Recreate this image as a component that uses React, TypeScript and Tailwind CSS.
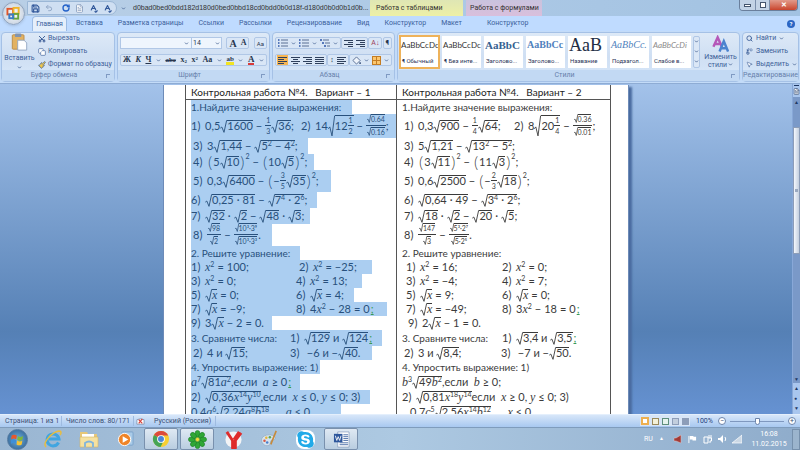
import type { ReactNode } from 'react';
import { ChevronDown, FileText, Save, Undo2, RotateCw, SpellCheck, Scissors, Copy, Paintbrush, Search, Replace, MousePointer2 } from 'lucide-react';
import { FaSkype } from 'react-icons/fa';

type Kids = { children: ReactNode };

/* ---------- formulas ---------- */

function Root({ children, tall }: Kids & { tall?: boolean }) {
  return (
    <span className="inline-flex items-stretch">
      <svg className="w-[7px] shrink-0 self-stretch" viewBox="0 0 7 12" preserveAspectRatio="none" fill="none" stroke="currentColor">
        <path d="M0.3 7.5L1.8 6.5L4 11.4L6.6 0.5H7" vectorEffect="non-scaling-stroke" strokeWidth="0.9" />
      </svg>
      <span className={`inline-flex items-center border-t border-current pb-px ${tall ? 'h-[22px]' : 'h-[13px]'}`}>{children}</span>
    </span>
  );
}

function SmallRoot({ children }: Kids) {
  return (
    <span className="inline-flex items-stretch">
      <svg className="w-[4px] shrink-0 self-stretch" viewBox="0 0 4 8" preserveAspectRatio="none" fill="none" stroke="currentColor">
        <path d="M0.2 5L1 4.5L2.3 7.5L3.8 0.4H4" strokeWidth="0.7" />
      </svg>
      <span className="inline-flex h-[9px] items-center border-t border-current">{children}</span>
    </span>
  );
}

const Frac = ({ a, b }: { a: ReactNode; b: ReactNode }) => (
  <span className="inline-flex flex-col items-center text-[7px] leading-[9px]">
    <span className="border-b border-current px-px">{a}</span>
    <span className="px-px pt-px">{b}</span>
  </span>
);

const Sup = ({ children }: Kids) => <span className="mb-1.5 text-[7px] leading-none">{children}</span>;
const HighSup = ({ children }: Kids) => <span className="mb-3 text-[7px] leading-none">{children}</span>;
const V = ({ children }: Kids) => <i className="font-['Liberation_Serif',serif] text-[12px]">{children}</i>;
const Op = ({ children }: Kids) => <span className="px-[3px]">{children}</span>;
const Par = ({ children }: Kids) => <span className="px-px text-[16px] leading-none font-light">{children}</span>;
const Gram = () => <span className="ml-px text-[#3a9a5a] underline">;</span>;

const Minus = () => <Op>−</Op>;
const Eq = () => <Op>=</Op>;
const Dot = () => <Op>·</Op>;
const RootX = () => <Root><V>x</V></Root>;
const X2 = () => <><V>x</V><Sup>2</Sup></>;

function Item({ n, w, children }: Kids & { n: string; w?: string }) {
  return (
    <span className={`inline-flex shrink-0 items-center text-[11px] ${w ?? ''}`}>
      <span className="w-[14px] shrink-0">{n}</span>
      {children}
    </span>
  );
}

type LineProps = Kids & { h?: string; sel?: string };

function Line({ h = 'h-[14px]', sel = '', children }: LineProps) {
  return (
    <div className={`flex items-center whitespace-pre ${h} ${sel && `${sel} bg-[#abcef1]`}`}>{children}</div>
  );
}

function VariantOne() {
  return (
    <div className="text-[#28507c]">
      <Line sel="w-[161px]">1.Найдите значение выражения:</Line>
      <Line h="h-[24px]" sel="w-[205px]">
        <Item n="1)" w="w-[110px]">0,5<Root>1600</Root><Minus /><Frac a="1" b="3" /><Root>36</Root>;</Item>
        <Item n="2)">14<Root tall>12<Frac a="1" b="2" /></Root><Minus /><Frac a={<SmallRoot>0.64</SmallRoot>} b={<SmallRoot>0.16</SmallRoot>} />;</Item>
      </Line>
      <Line h="h-[16px]" sel="w-[117px] pl-0.5"><Item n="3)">3<Root>1,44</Root><Minus /><Root>5<Sup>2</Sup><Minus />4<Sup>2</Sup></Root>;</Item></Line>
      <Line h="h-[16px]" sel="w-[123px] pl-0.5"><Item n="4)"><Par>(</Par>5<Root>10</Root><Par>)</Par><HighSup>2</HighSup><Minus /><Par>(</Par>10<Root>5</Root><Par>)</Par><HighSup>2</HighSup>;</Item></Line>
      <Line h="h-[22px]" sel="w-[140px] pl-0.5"><Item n="5)">0,3<Root>6400</Root><Minus /><Par>(</Par>−<Frac a="3" b="5" /><Root>35</Root><Par>)</Par><HighSup>2</HighSup>;</Item></Line>
      <Line h="h-[16px]" sel="w-[126px]"><Item n="6)"><Root>0,25<Dot />81</Root><Minus /><Root>7<Sup>4</Sup><Dot />2<Sup>6</Sup></Root>;</Item></Line>
      <Line h="h-[16px]" sel="w-[119px]"><Item n="7)"><Root>32</Root><Dot /><Root>2</Root><Minus /><Root>48</Root><Dot /><Root>3</Root>;</Item></Line>
      <Line h="h-[22px]" sel="w-[81px] pl-0.5"><Item n="8)"><Frac a={<SmallRoot>98</SmallRoot>} b={<SmallRoot>2</SmallRoot>} /><Minus /><Frac a={<SmallRoot>10³·3⁹</SmallRoot>} b={<SmallRoot>10³·3³</SmallRoot>} />.</Item></Line>
      <Line sel="w-[109px]">2. Решите уравнение:</Line>
      <Line sel="w-[181px]"><Item n="1)" w="w-[108px]"><X2 /><Eq />100;</Item><Item n="2)"><X2 /><Eq />−25;</Item></Line>
      <Line sel="w-[171px]"><Item n="3)" w="w-[105px]"><X2 /><Eq />0;</Item><Item n="4)"><X2 /><Eq />13;</Item></Line>
      <Line sel="w-[163px]"><Item n="5)" w="w-[105px]"><RootX /><Eq />0;</Item><Item n="6)"><RootX /><Eq />4;</Item></Line>
      <Line sel="w-[196px]"><Item n="7)" w="w-[105px]"><RootX /><Eq />−9;</Item><Item n="8)">4<X2 /><Minus />28<Eq />0<Gram /></Item></Line>
      <Line sel="w-[81px]"><Item n="9)">3<RootX /><Minus />2<Eq />0.</Item></Line>
      <Line h="h-[16px]" sel="w-[191px]"><span className="w-[99px]">3. Сравните числа:</span><Item n="1)"><Root>129</Root> и <Root>124</Root><Gram /></Item></Line>
      <Line sel="w-[181px] pl-0.5"><Item n="2)" w="w-[97px]">4 и <Root>15</Root>;</Item><Item n="3)"> −6 и −<Root>40</Root>.</Item></Line>
      <Line sel="w-[129px]">4. Упростить выражение: 1)</Line>
      <Line h="h-[16px] text-[11px]" sel="w-[109px]"><V>a</V><Sup>7</Sup><Root>81<V>a</V><Sup>2</Sup></Root>,если  <V>a</V> ≥ 0<Gram /></Line>
      <Line sel="w-[179px]"><Item n="2)"><Root>0,36<V>x</V><Sup>14</Sup><V>y</V><Sup>10</Sup></Root>,если  <V>x</V> ≤ 0, <V>y</V> ≤ 0; 3)</Item></Line>
      <Line h="h-[16px] text-[11px]" sel="w-[150px]">0,4<V>a</V><Sup>6</Sup> <Root>2,24<V>a</V><Sup>8</Sup><V>b</V><Sup>18</Sup></Root>,     <V>a</V> ≤ 0</Line>
    </div>
  );
}

function VariantTwo() {
  return (
    <div className="text-[#3b3b3b]">
      <Line>1.Найдите значение выражения:</Line>
      <Line h="h-[24px] pl-0.5">
        <Item n="1)" w="w-[110px]">0,3<Root>900</Root><Minus /><Frac a="1" b="4" /><Root>64</Root>;</Item>
        <Item n="2)">8<Root tall>20<Frac a="1" b="4" /></Root><Minus /><Frac a={<SmallRoot>0.36</SmallRoot>} b={<SmallRoot>0.01</SmallRoot>} />;</Item>
      </Line>
      <Line h="h-[16px] pl-0.5"><Item n="3)">5<Root>1,21</Root><Minus /><Root>13<Sup>2</Sup><Minus />5<Sup>2</Sup></Root>;</Item></Line>
      <Line h="h-[16px] pl-0.5"><Item n="4)"><Par>(</Par>3<Root>11</Root><Par>)</Par><HighSup>2</HighSup><Minus /><Par>(</Par>11<Root>3</Root><Par>)</Par><HighSup>2</HighSup>;</Item></Line>
      <Line h="h-[22px] pl-0.5"><Item n="5)">0,6<Root>2500</Root><Minus /><Par>(</Par>−<Frac a="2" b="3" /><Root>18</Root><Par>)</Par><HighSup>2</HighSup>;</Item></Line>
      <Line h="h-[16px] pl-0.5"><Item n="6)"><Root>0,64<Dot />49</Root><Minus /><Root>3<Sup>4</Sup><Dot />2<Sup>6</Sup></Root>;</Item></Line>
      <Line h="h-[16px] pl-0.5"><Item n="7)"><Root>18</Root><Dot /><Root>2</Root><Minus /><Root>20</Root><Dot /><Root>5</Root>;</Item></Line>
      <Line h="h-[22px] pl-0.5"><Item n="8)"><Frac a={<SmallRoot>147</SmallRoot>} b={<SmallRoot>3</SmallRoot>} /><Minus /><Frac a={<SmallRoot>5³·2⁷</SmallRoot>} b={<SmallRoot>5·2⁵</SmallRoot>} />.</Item></Line>
      <Line>2. Решите уравнение:</Line>
      <Line h="h-[14px] pl-1"><Item n="1)" w="w-[96px]"><X2 /><Eq />16;</Item><Item n="2)"><X2 /><Eq />0;</Item></Line>
      <Line h="h-[14px] pl-1"><Item n="3)" w="w-[96px]"><X2 /><Eq />−4;</Item><Item n="4)"><X2 /><Eq />7;</Item></Line>
      <Line h="h-[14px] pl-1"><Item n="5)" w="w-[96px]"><RootX /><Eq />9;</Item><Item n="6)"><RootX /><Eq />0;</Item></Line>
      <Line h="h-[14px] pl-1"><Item n="7)" w="w-[96px]"><RootX /><Eq />−49;</Item><Item n="8)">3<X2 /><Minus />18<Eq />0<Gram /></Item></Line>
      <Line h="h-[14px] pl-1.5"><Item n="9)">2<RootX /><Minus />1<Eq />0.</Item></Line>
      <Line h="h-[16px]"><span className="w-[100px]">3. Сравните числа:</span><Item n="1)"><Root>3,4</Root> и <Root>3,5</Root><Gram /></Item></Line>
      <Line h="h-[14px] pl-0.5"><Item n="2)" w="w-[97px]">3 и <Root>8,4</Root>;</Item><Item n="3)"> −7 и −<Root>50</Root>.</Item></Line>
      <Line>4. Упростить выражение: 1)</Line>
      <Line h="h-[16px] text-[11px]"><V>b</V><Sup>3</Sup><Root>49<V>b</V><Sup>2</Sup></Root>,если  <V>b</V> ≥ 0;</Line>
      <Line><Item n="2)"><Root>0,81<V>x</V><Sup>18</Sup><V>y</V><Sup>14</Sup></Root>если  <V>x</V> ≥ 0, <V>y</V> ≤ 0; 3)</Item></Line>
      <Line h="h-[16px] pl-2 text-[11px]">0,7<V>c</V><Sup>5</Sup> <Root>2,56<V>x</V><Sup>14</Sup><V>b</V><Sup>12</Sup></Root>,     <V>x</V> ≤ 0</Line>
    </div>
  );
}

/* ---------- title bar and ribbon ---------- */

const Caret = () => <ChevronDown className="size-[5px] shrink-0 text-[#4a6796]" strokeWidth={4} />;

function WindowsFlag({ className }: { className: string }) {
  return (
    <svg viewBox="0 0 20 20" className={className}>
      <path d="M1 4q4-3 8 0l-1 6q-4-3-8 0z" fill="#e8582c" />
      <path d="M10.500 4.500q4 3 8 0l-1 6q-4 3-8 0z" fill="#7fb83a" />
      <path d="M0 11q4-3 8 0l-1 6q-4-3-7 0z" fill="#3f8fd8" />
      <path d="M9.500 11.500q4 3 8 0l-1 6q-4 3-8 0z" fill="#f5c332" />
    </svg>
  );
}

function TitleBar() {
  return (
    <header className="relative flex h-4 shrink-0 items-center bg-linear-to-r from-[#b9cfe6] via-[#aecae6] to-[#a2c2e2] text-[7px] whitespace-nowrap text-[#333]">
      <button aria-label="Office" className="absolute top-0.5 left-0.5 z-10 flex size-[23px] items-center justify-center rounded-full border border-[#8fa3bd] bg-radial from-white to-[#b8c6d8] shadow">
        <svg viewBox="0 0 16 16" className="size-[15px]" fill="none" strokeWidth="2">
          <rect x="1.500" y="3" width="6" height="6" stroke="#e0562b" />
          <rect x="8" y="2" width="5.500" height="6" stroke="#f0b52a" />
          <rect x="8" y="8.500" width="5" height="5" stroke="#6aa53c" />
          <rect x="3.500" y="9" width="4" height="4" stroke="#3b7cc4" />
        </svg>
      </button>
      <div className="ml-[27px] flex h-[14px] w-[90px] items-center gap-[5px] rounded-r-full border border-[#9bb7d6] bg-[#cfdff2] pl-[3px] text-[#33599b]">
        <Save className="size-[9px]" strokeWidth={3} />
        <Undo2 className="size-[8px] text-[#93a9c8]" strokeWidth={3} />
        <RotateCw className="ml-1 size-[8px] text-[#2563c9]" strokeWidth={4} />
        <FileText className="size-[9px] fill-white text-[#7b93b5]" />
        <SpellCheck className="size-[9px]" strokeWidth={3} />
        <SpellCheck className="size-[9px]" strokeWidth={3} />
      </div>
      <span className="ml-1 w-[12px]"><Caret /></span>
      <h1 className="w-[237px] font-['Liberation_Sans',sans-serif]">d0bad0bed0bdd182d180d0bed0bbd18cd0bdd0b0d18f-d180d0b0d0b1d0b...</h1>
      <div className="h-full w-[93px] bg-linear-to-b from-[#dfe6b4] to-[#eef0a6] pl-[6px] leading-4">Работа с таблицами</div>
      <div className="ml-[3px] h-full w-[76px] bg-linear-to-b from-[#c9c3de] to-[#d9bfdc] pl-1 leading-4">Работа с формулами</div>
      <div className="mr-[2px] ml-auto flex h-[11px] self-start overflow-hidden rounded-b-sm border border-t-0 border-[#6a7f9c] leading-[10px] text-[#36465c]">
        <button aria-label="Свернуть" className="flex w-[16px] items-center justify-center border-r border-[#7b8fac] bg-[#c3d3e6]"><span className="h-[3px] w-[7px] border border-[#44546c] bg-white" /></button>
        <button aria-label="Развернуть" className="flex w-[14px] items-center justify-center border-r border-[#7b8fac] bg-[#c3d3e6]"><span className="size-[6px] border border-[#44546c] bg-white" /></button>
        <button aria-label="Закрыть" className="w-[27px] bg-linear-to-b from-[#e19a8b] to-[#c8432b] font-bold text-white">✕</button>
      </div>
    </header>
  );
}

const tabs = ['Вставка', 'Разметка страницы', 'Ссылки', 'Рассылки', 'Рецензирование', 'Вид', 'Конструктор', 'Макет'];

function Tabs() {
  return (
    <nav className="flex h-[15px] shrink-0 items-center gap-[15px] bg-[#bfdbff] pl-[32px] text-[7px] whitespace-nowrap text-[#3b5f9b]">
      <button className="-mr-[6px] h-full w-[35px] rounded-t-sm border border-b-0 border-[#9dbce4] bg-[#e5effb]">Главная</button>
      {tabs.map((t) => <button key={t}>{t}</button>)}
      <button className="ml-[10px]">Конструктор</button>
      <button aria-label="Справка" className="mr-[5px] ml-auto size-[8px] rounded-full bg-[#2b66c4] text-[6px] leading-[8px] font-bold text-white">?</button>
    </nav>
  );
}

function Group({ title, w, children }: Kids & { title: string; w: string }) {
  return (
    <section className={`flex flex-col rounded-sm border border-[#a5c1e6] bg-linear-to-b from-[#dde9f7] via-[#cfdff3] to-[#d8e8fa] ${w}`}>
      <div className="flex min-h-0 flex-1 items-center">{children}</div>
      <div className="flex h-[11px] items-center bg-[#c2d9f3] text-[7px] text-[#6680ab]">
        <span className="flex-1 text-center whitespace-nowrap">{title}</span>
        {title !== 'Редактирование' && <span className="mr-1 size-[4px] border-t border-l border-[#7f9ac2]" />}
      </div>
    </section>
  );
}

const ToolRow = ({ children }: Kids) => (
  <div className="flex h-[12px] items-center gap-[3px] rounded-xs border border-[#b0c7e6] bg-[#d9e6f6] px-[2px]">{children}</div>
);

function Bars({ kind = 'w-[9px]' }: { kind?: string }) {
  return (
    <span className="flex w-[9px] flex-col gap-px">
      <span className="h-px w-[9px] bg-[#2f405c]" />
      <span className={`h-px bg-[#2f405c] ${kind}`} />
      <span className="h-px w-[9px] bg-[#2f405c]" />
      <span className={`h-px bg-[#2f405c] ${kind}`} />
    </span>
  );
}

function ListIcon({ step }: { step?: boolean }) {
  return (
    <svg viewBox="0 0 10 8" className="h-[8px] w-[10px]" stroke="#4c6288" strokeWidth="0.9">
      <path d={step ? 'M0 1h2M2 4h2M4 7h2' : 'M0 1h1.500M0 4h1.500M0 7h1.500'} stroke="#2c55a8" strokeWidth="1.400" />
      <path d={step ? 'M3 1h6M5 4h5M7 7h3' : 'M3 1h7M3 4h7M3 7h7'} />
    </svg>
  );
}

const styleCards = [
  { name: '¶ Обычный', sample: 'AaBbCcDc', look: 'font-[Lato,sans-serif] text-[8px] text-[#333]' },
  { name: '¶ Без инте...', sample: 'AaBbCcDc', look: 'font-[Lato,sans-serif] text-[8px] text-[#333]' },
  { name: 'Заголово...', sample: 'AaBbC', look: "font-['Liberation_Serif',serif] text-[11px] font-bold text-[#365f91]" },
  { name: 'Заголово...', sample: 'AaBbCc', look: "font-['Liberation_Serif',serif] text-[10px] font-bold text-[#4f81bd]" },
  { name: 'Название', sample: 'AaB', look: "font-['Liberation_Serif',serif] text-[18px] text-[#222e44]" },
  { name: 'Подзагол...', sample: 'AaBbCc.', look: "font-['Liberation_Serif',serif] text-[10px] italic text-[#4f81bd]" },
  { name: 'Слабое в...', sample: 'AaBbCcDi', look: 'font-[Lato,sans-serif] text-[8px] italic text-[#8a8a8a]' },
];

function Ribbon() {
  return (
    <div className="flex h-[52px] shrink-0 gap-[2px] bg-[#c3dbf8] px-px pt-px pb-px text-[7px] whitespace-nowrap text-[#3d5f98]">
      <Group title="Буфер обмена" w="w-[114px] shrink-0">
        <button className="flex w-[35px] flex-col items-center gap-[3px] leading-[8px]">
          <svg viewBox="0 0 18 20" className="h-[18px] w-[17px]">
            <rect x="1" y="2" width="13" height="16" rx="1" fill="#e3b261" stroke="#b98a45" />
            <rect x="4" y="0.500" width="7" height="4" rx="1" fill="#8294ae" />
            <path d="M7 8h7l3 3v8H7z" fill="#fff" stroke="#91a5c2" />
          </svg>
          Вставить
          <Caret />
        </button>
        <div className="flex flex-col gap-[4px] pl-px">
          <button className="flex h-[9px] items-center gap-[2px]"><Scissors className="size-[8px] -rotate-90" strokeWidth={3} />Вырезать</button>
          <button className="flex h-[9px] items-center gap-[2px]"><Copy className="size-[8px] fill-white" />Копировать</button>
          <button className="flex h-[9px] items-center gap-[2px]"><Paintbrush className="size-[8px] fill-[#f0c648]" />Формат по образцу</button>
        </div>
      </Group>

      <Group title="Шрифт" w="w-[153px] shrink-0">
        <div className="flex flex-1 flex-col gap-[5px] px-[2px] text-[8px] text-[#27364f]">
          <div className="flex items-center justify-between">
            <div className="flex items-center">
              <select aria-label="Шрифт" className="h-[12px] w-[64px] appearance-none border border-r-0 border-[#b0c7e6] bg-[#eef5fd]"><option></option></select>
              <span className="flex h-[12px] w-[7px] items-center border-y border-[#b0c7e6] bg-[#eef5fd]"><Caret /></span>
              <select aria-label="Размер" className="h-[12px] w-[24px] appearance-none border border-r-0 border-[#b0c7e6] bg-[#eef5fd] pl-px text-[7px]"><option>14</option></select>
              <span className="flex h-[12px] w-[7px] items-center border-y border-r border-[#b0c7e6] bg-[#eef5fd]"><Caret /></span>
            </div>
            <div className="flex h-[12px] items-center gap-[4px] rounded-xs border border-[#b0c7e6] bg-[#d9e6f6] px-[2px] font-['Liberation_Serif',serif]">
              <b className="text-[10px]">A</b><b>A</b>
            </div>
            <ToolRow><span className="text-[6px]">Aa</span></ToolRow>
          </div>
          <div className="flex h-[12px] items-center justify-between rounded-xs border border-[#b0c7e6] bg-[#d9e6f6] px-[2px] font-['Liberation_Serif',serif] font-bold">
            <button>Ж</button>
            <button className="italic">К</button>
            <button className="underline">Ч</button>
            <Caret />
            <button className="text-[7px] line-through">abc</button>
            <button>x<sub className="text-[5px]">2</sub></button>
            <button>x<sup className="text-[5px]">2</sup></button>
            <button>Aa</button>
            <Caret />
            <button className="h-[9px] border-b-3 border-[#f2e422] text-[7px] leading-[6px]">ab</button>
            <Caret />
            <button className="h-[10px] border-b-2 border-[#d83a3a] text-[9px] leading-[8px]">A</button>
            <Caret />
          </div>
        </div>
      </Group>

      <Group title="Абзац" w="w-[123px] shrink-0">
        <div className="flex flex-1 flex-col gap-[5px] px-[2px]">
          <div className="flex justify-between">
            <ToolRow><ListIcon /><Caret /><ListIcon /><Caret /><ListIcon step /><Caret /></ToolRow>
            <ToolRow><Bars kind="w-[5px] ml-1" /><Bars kind="w-[5px] ml-1" /></ToolRow>
            <ToolRow><span className="text-[#9c3d58]">А↓</span></ToolRow>
            <ToolRow><b className="text-[#27364f]">¶</b></ToolRow>
          </div>
          <div className="flex justify-between">
            <ToolRow>
              <span className="-ml-px flex h-[10px] items-center bg-[#f7b653] px-px"><Bars kind="w-[6px]" /></span>
              <Bars kind="w-[5px] ml-0.5" />
              <Bars kind="w-[6px] ml-[3px]" />
              <Bars />
            </ToolRow>
            <ToolRow><span className="text-[#27364f]">↕</span><Bars kind="w-[7px]" /></ToolRow>
            <ToolRow>
              <svg viewBox="0 0 10 10" className="size-[9px]"><path d="M1 5l4-4 4 4-4 4z" fill="#eef3fa" stroke="#52698f" /><path d="M8 7h2v2h-2z" fill="#52698f" /></svg>
              <Caret />
              <span className="grid size-[9px] grid-cols-2 gap-px border border-[#c47c22] bg-[#c47c22]">
                <span className="bg-[#fcc66d]" /><span className="bg-[#fcc66d]" /><span className="bg-[#fcc66d]" /><span className="bg-[#fcc66d]" />
              </span>
              <Caret />
            </ToolRow>
          </div>
        </div>
      </Group>

      <Group title="Стили" w="min-w-0 flex-1">
        <div className="flex flex-1 items-center gap-[3px] pl-[2px]">
          {styleCards.map((s, i) => (
            <button key={i} className={`flex h-[32px] w-[39px] shrink-0 flex-col bg-white px-px text-left text-[#2c3558] ${i === 0 ? 'outline-2 -outline-offset-1 outline-[#eeb25a]' : ''}`}>
              <span className={`flex h-[19px] items-center leading-none ${s.look}`}>{s.sample}</span>
              <span className="pl-px text-[6px] leading-[12px]">{s.name}</span>
            </button>
          ))}
          <div className="-ml-px flex h-[32px] w-[7px] flex-col justify-around rounded-xs border border-[#b0c7e6] bg-[#dbe7f6]"><Caret /><Caret /><Caret /></div>
        </div>
        <button className="flex w-[37px] flex-col items-center leading-[8px]">
          <svg viewBox="0 0 18 18" className="h-[18px] w-[17px]" fill="none" strokeWidth="2.600">
            <path d="M1.500 12L6 2l4.500 10M3 9h6" stroke="#b558b8" />
            <path d="M8 17l4.500-11L17 17M9.500 13.500h6" stroke="#4a83cf" />
          </svg>
          Изменить
          <span className="flex items-center gap-px">стили<Caret /></span>
        </button>
      </Group>

      <Group title="Редактирование" w="w-[57px] shrink-0">
        <div className="flex flex-col gap-[4px] pl-[3px]">
          <button className="flex h-[9px] items-center gap-[3px]"><Search className="size-[7px]" strokeWidth={3} />Найти<Caret /></button>
          <button className="flex h-[9px] items-center gap-[3px]"><Replace className="size-[7px]" strokeWidth={3} />Заменить</button>
          <button className="flex h-[9px] items-center gap-[3px]"><MousePointer2 className="size-[7px] fill-white" />Выделить<Caret /></button>
        </div>
      </Group>
    </div>
  );
}

/* ---------- document ---------- */

function Workspace() {
  return (
    <main className="flex min-h-0 flex-1 overflow-hidden border-t border-[#8eacd4] bg-linear-to-b from-[#a3c2ea] from-0% via-[#5580b5] via-75% to-[#6692d2]">
      <div className="flex min-w-0 flex-1 justify-center overflow-hidden pt-px">
        <div className="h-max w-[466px] border-x border-[#6d8bb8] bg-white pr-[17px] pb-4 pl-[21px] font-[Lato,'Noto_Sans',sans-serif] text-[10px] leading-[14px] shadow-[3px_2px_2px_#4a6ca0]">
          <table className="w-full table-fixed border-collapse border-x border-[#555] whitespace-nowrap">
            <thead>
              <tr className="border-b border-[#555] text-left text-[#222]">
                <th className="h-[14px] w-[211px] border-r border-[#555] p-0 pl-[5px] font-normal whitespace-pre">Контрольная работа №4.   Вариант – 1</th>
                <th className="p-0 pl-[5px] font-normal whitespace-pre">Контрольная работа №4.   Вариант – 2</th>
              </tr>
            </thead>
            <tbody>
              <tr className="align-top">
                <td className="border-r border-[#555] p-0 pl-[5px]"><VariantOne /></td>
                <td className="p-0 pl-[5px]"><VariantTwo /></td>
              </tr>
            </tbody>
          </table>
        </div>
      </div>
      <div className="flex w-[8px] flex-col items-center border-l border-[#88a8d8] bg-[#a9c6ee] text-[5px] text-[#1f3864]">
        <span className="mt-px h-px w-[5px] bg-[#1f3864]" />
        <FileText className="my-[2px] size-[7px] fill-white" />
        <div className="flex w-full flex-1 flex-col items-center bg-[#7a99c8]">
          <span className="h-[30px] leading-[10px]">▲</span>
          <div className="flex h-[127px] w-full items-center justify-center border border-[#8c9db8] bg-linear-to-r from-[#f4f8fd] to-[#c4cfdf]"><span className="size-[3px] bg-[#9aa9c0]" /></div>
          <span className="mt-auto leading-[8px]">▼</span>
        </div>
        <div className="flex h-[31px] flex-col justify-around leading-none"><span>▲</span><span>●</span><span>▼</span></div>
      </div>
    </main>
  );
}

function StatusBar() {
  return (
    <footer className="flex h-[13px] shrink-0 items-center border-t border-[#e4effc] bg-linear-to-b from-[#d7e6f9] to-[#a8c8f0] pl-[5px] text-[7px] whitespace-nowrap text-[#3a4f75]">
      <span className="w-[57px] border-r border-[#9fbbe0]">Страница: 1 из 1</span>
      <span className="w-[72px] border-r border-[#9fbbe0] pl-[4px]">Число слов: 80/171</span>
      <svg viewBox="0 0 10 10" className="ml-[2px] size-[9px]"><path d="M1 3l4-1 4 1v5H1z" fill="#fff" stroke="#8496b3" /><path d="M3 3l4 4M7 2L3 7" stroke="#d6403a" strokeWidth="1.300" /></svg>
      <span className="ml-[9px] border-r border-[#9fbbe0] pr-1">Русский (Россия)</span>
      <div className="ml-auto flex h-[10px] items-center gap-[3px] bg-[#d8e5f6] px-px">
        <span className="size-[8px] border-2 border-[#eeb050] bg-white" />
        <span className="size-[7px] border border-[#9a8a5c] bg-[#f4f1d8]" />
        <span className="size-[7px] border border-[#5e8e7c] bg-[#e5f3ec]" />
        <span className="size-[7px] border border-[#8d9db8] bg-[#c2cede]" />
        <span className="size-[7px] bg-[#8d9db8]" />
      </div>
      <span className="w-[28px] pl-[6px] text-[#24427c]">100%</span>
      <button aria-label="Уменьшить" className="size-[8px] rounded-full border border-[#6c84ab] bg-white leading-[5px]">−</button>
      <input type="range" aria-label="Масштаб" defaultValue={50} className="mx-[4px] h-px w-[54px] appearance-none bg-[#7f98bf] [&::-webkit-slider-thumb]:h-[7px] [&::-webkit-slider-thumb]:w-[5px] [&::-webkit-slider-thumb]:appearance-none [&::-webkit-slider-thumb]:rounded-b-full [&::-webkit-slider-thumb]:border [&::-webkit-slider-thumb]:border-[#6c84ab] [&::-webkit-slider-thumb]:bg-white" />
      <button aria-label="Увеличить" className="mr-[4px] size-[8px] rounded-full border border-[#6c84ab] bg-white leading-[5px]">+</button>
    </footer>
  );
}

/* ---------- taskbar ---------- */

function TaskButton({ label, open, children }: Kids & { label: string; open?: boolean }) {
  return (
    <button
      aria-label={label}
      className={`flex h-[22px] w-[34px] items-center justify-center rounded-xs ${open ? 'border border-[#7990ad] bg-linear-to-b from-[#dfe9f3] to-[#b9cde0]' : ''}`}
    >
      {children}
    </button>
  );
}

function Taskbar() {
  return (
    <div className="flex h-[23px] shrink-0 items-center gap-[2px] border-t border-[#7f9cbc] bg-linear-to-r from-[#9ab6d2] via-[#adc9e2] to-[#8faccb]">
      <TaskButton label="Пуск">
        <span className="flex size-[21px] items-center justify-center rounded-full border border-[#53799f] bg-radial from-[#6fb2dc] to-[#2b5a8e]"><WindowsFlag className="size-[13px]" /></span>
      </TaskButton>
      <TaskButton label="Internet Explorer">
        <svg viewBox="0 0 20 20" className="size-[20px]" fill="none">
          <path d="M15.500 13.500A6 6 0 1 1 16 10H6" stroke="#41a5e0" strokeWidth="3" />
          <path d="M3 18C-1 14 9 3 16 2c3 0 2 3 1 4" stroke="#e9bd3c" strokeWidth="1.400" />
        </svg>
      </TaskButton>
      <TaskButton label="Проводник">
        <svg viewBox="0 0 20 20" className="size-[20px]">
          <path d="M1 3h7l1 2h9v13H1z" fill="#e6c778" />
          <path d="M3 5h12v6H3z" fill="#fff" />
          <path d="M1 8h18v10H1z" fill="#f5e1a0" stroke="#d4b565" strokeWidth="0.600" />
          <path d="M6 18v-4q4-3 8 0v4" fill="none" stroke="#7fb4dd" strokeWidth="1.800" />
        </svg>
      </TaskButton>
      <TaskButton label="Media Player">
        <svg viewBox="0 0 18 18" className="size-[17px]">
          <rect x="5" y="1" width="12" height="14" rx="1" fill="#a9cbe8" stroke="#7ba4cb" />
          <circle cx="8" cy="9" r="6.500" fill="#ef8427" stroke="#fff" />
          <path d="M6 5.500l6 3.500-6 3.500z" fill="#fff" />
        </svg>
      </TaskButton>
      <TaskButton label="Chrome" open>
        <svg viewBox="0 0 20 20" className="size-[18px]">
          <circle cx="10" cy="10" r="9" fill="#f6cf33" />
          <path d="M10 10L2.200 5.500A9 9 0 0 1 18 6H10z" fill="#dc4a3d" />
          <path d="M10 10L2.200 5.500A9 9 0 0 0 9.500 19L13 12z" fill="#45a456" />
          <circle cx="10" cy="10" r="4.300" fill="#fff" />
          <circle cx="10" cy="10" r="3.300" fill="#4a86d8" />
        </svg>
      </TaskButton>
      <TaskButton label="ICQ" open>
        <svg viewBox="0 0 20 20" className="size-[19px]" fill="#2fa736" stroke="#1d7d26" strokeWidth="0.600">
          {[0, 45, 90, 135, 180, 225, 270, 315].map((a) => <ellipse key={a} cx="10" cy="4" rx="2.600" ry="3.600" transform={`rotate(${a} 10 10)`} />)}
          <circle cx="10" cy="10" r="2.300" fill="#f2dc3a" />
        </svg>
      </TaskButton>
      <TaskButton label="Яндекс">
        <svg viewBox="0 0 20 20" className="size-[19px]">
          <circle cx="10" cy="10" r="8.500" fill="#f3f3f5" />
          <path d="M3 2l6 9v8h3v-8l6-8M16 2l-5.500 8" fill="none" stroke="#df2b2b" strokeWidth="3" strokeLinejoin="round" />
        </svg>
      </TaskButton>
      <TaskButton label="Paint">
        <svg viewBox="0 0 20 20" className="size-[18px]">
          <path d="M2 13C0 7 8 4 14 6c5 2 3 5 0 5s-2 3-3 5c-2 3-8 1-9-3z" fill="#d5e2ee" stroke="#8aa4be" strokeWidth="0.700" />
          <circle cx="5" cy="12" r="1.400" fill="#d65745" /><circle cx="7" cy="8.500" r="1.400" fill="#e8b536" /><circle cx="11" cy="8" r="1.400" fill="#5aa65a" /><circle cx="8" cy="14" r="1.400" fill="#4b7fcb" />
          <path d="M18 1l-6 15" stroke="#c78a3b" strokeWidth="1.800" />
        </svg>
      </TaskButton>
      <TaskButton label="Skype">
        <span className="flex size-[19px] items-center justify-center text-[#22aae8]"><FaSkype className="size-[19px] rounded-lg bg-white" /></span>
      </TaskButton>
      <TaskButton label="Word" open>
        <svg viewBox="0 0 18 18" className="size-[17px]">
          <path d="M5 1h12v16H5z" fill="#fff" stroke="#7c93b8" strokeWidth="0.700" />
          <path d="M11 4h5M11 6h5M11 8h5M11 10h5M7 12.500h9M7 14.500h9" stroke="#4e6fa8" />
          <path d="M1 3h9v9H1z" fill="#2d569c" />
          <path d="M2.500 5l1.500 5 1.500-4L7 10l1.500-5" fill="none" stroke="#fff" strokeWidth="0.900" />
        </svg>
      </TaskButton>

      <div className="ml-auto flex items-center gap-[5px] text-[7px] text-white">
        <span className="w-[10px]">RU</span>
        <span className="text-[5px]">▲</span>
        <svg viewBox="0 0 10 10" className="ml-1 size-[10px]"><path d="M1 4h2l5-3v8L3 7H1z" fill="#a33a36" stroke="#e0c0c0" strokeWidth="0.500" /></svg>
        <svg viewBox="0 0 10 10" className="size-[9px]"><path d="M1 1v8" stroke="#fff" /><path d="M2 1h4v1h3v4H5V5H2z" fill="#fff" /></svg>
        <svg viewBox="0 0 10 10" className="size-[10px]" fill="none" stroke="#fff"><path d="M2 3h4v6H2zM7 1v3M9 1v3M6.500 4h3v3h-1.500v2" /></svg>
        <svg viewBox="0 0 10 10" className="size-[10px]"><path d="M1 4h2l3-3v8L3 6H1z" fill="#fff" /><path d="M8 3q1.500 2 0 4" fill="none" stroke="#fff" /></svg>
        <svg viewBox="0 0 10 10" className="size-[10px]"><path d="M0 9L10 1v8z" fill="#cbd8e5" stroke="#fff" strokeWidth="0.700" /></svg>
        <time className="ml-1 w-[36px] text-center leading-[10px]">16:08<br />11.02.2015</time>
        <button aria-label="Показать рабочий стол" className="h-[21px] w-[8px] border border-[#7690ac] bg-[#9bb4cd]" />
      </div>
    </div>
  );
}

export default function App() {
  return (
    <div className="flex h-screen w-full flex-col overflow-hidden font-[Roboto,'Noto_Sans',sans-serif]">
      <TitleBar />
      <Tabs />
      <Ribbon />
      <Workspace />
      <StatusBar />
      <Taskbar />
    </div>
  );
}
